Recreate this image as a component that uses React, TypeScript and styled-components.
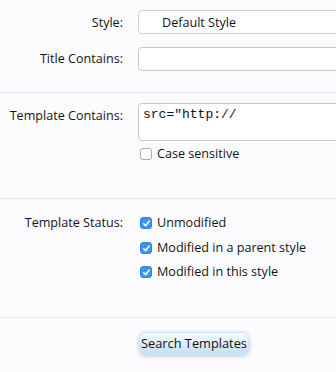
import React from "react";
import styled, { createGlobalStyle } from "styled-components";

const Global = createGlobalStyle`
  html, body { margin: 0; padding: 0; background: #fcfcff; }
  body { font-family: "Open Sans", "Liberation Sans", sans-serif; font-size: 12.6px; color: #141414; }
`;

const Form = styled.form`
  width: 336px;
  overflow: hidden;
`;

const Section = styled.div<{ $pt: number; $pb: number; $last?: boolean }>`
  padding: ${(p) => p.$pt}px 0 ${(p) => p.$pb}px;
  border-bottom: ${(p) => (p.$last ? "none" : "1px solid #dfeef3")};
  display: flex;
  flex-direction: column;
`;

const Row = styled.div<{ $gap?: number }>`
  display: grid;
  grid-template-columns: 123px 1fr;
  column-gap: 15px;
  align-items: start;
  margin-bottom: ${(p) => p.$gap ?? 0}px;
`;

const Label = styled.div<{ $pt: number }>`
  text-align: right;
  padding-top: ${(p) => p.$pt}px;
  line-height: 16px;
  white-space: nowrap;
`;

const Field = styled.div`
  display: flex;
  flex-direction: column;
  min-width: 0;
`;

const SelectBox = styled.div`
  height: 24px;
  box-sizing: border-box;
  width: 220px;
  border: 1px solid #cfcfd2;
  border-radius: 4px;
  background: #fff;
  padding-left: 23px;
  line-height: 23px;
`;

const TextInput = styled.div`
  height: 24px;
  box-sizing: border-box;
  width: 220px;
  border: 1px solid #c8c8cc;
  border-radius: 4px;
  background: #fff;
`;

const TextArea = styled.div`
  height: 38px;
  box-sizing: border-box;
  width: 220px;
  border: 1px solid #c8c8cc;
  border-radius: 4px;
  background: #fff;
  padding: 3px 4px;
  font-family: "Liberation Mono", monospace;
  font-size: 13px;
  line-height: 16px;
`;

const CheckRow = styled.label<{ $mt: number }>`
  display: flex;
  align-items: center;
  gap: 5px;
  margin-top: ${(p) => p.$mt}px;
  margin-left: 2px;
  height: 16px;
  line-height: 16px;
  white-space: nowrap;
`;

const Box = styled.span<{ $checked: boolean }>`
  width: 12px;
  height: 12px;
  box-sizing: border-box;
  border-radius: 3px;
  flex: none;
  display: flex;
  align-items: center;
  justify-content: center;
  background: ${(p) => (p.$checked ? "#3c93f0" : "#fff")};
  border: 1px solid ${(p) => (p.$checked ? "#2f83e0" : "#a9a9ad")};
`;

const Check = ({ checked }: { checked: boolean }) => (
  <Box $checked={checked}>
    {checked && (
      <svg width="9" height="9" viewBox="0 0 9 9">
        <path d="M1.8 4.8 L3.7 6.6 L7.2 2.2" fill="none" stroke="#fff" strokeWidth="1.6" strokeLinecap="round" strokeLinejoin="round" />
      </svg>
    )}
  </Box>
);

const ButtonRow = styled.div`
  padding-left: 139px;
`;

const Button = styled.button`
  height: 23px;
  width: 110px;
  padding: 0;
  border: 1px solid #d3e3ef;
  border-radius: 7px;
  background: linear-gradient(to bottom, #f4faff 0%, #dcedf9 55%, #c3def2 100%);
  box-shadow: 0 1px 4px rgba(110, 140, 170, 0.5);
  font-family: "Open Sans", "Liberation Sans", sans-serif;
  font-size: 12.8px;
  color: #111;
  line-height: 21px;
`;

export default function App() {
  return (
    <>
      <Global />
      <Form>
        <Section $pt={10} $pb={21}>
          <Row $gap={13}>
            <Label $pt={5}>Style:</Label>
            <Field>
              <SelectBox>Default Style</SelectBox>
            </Field>
          </Row>
          <Row>
            <Label $pt={4}>Title Contains:</Label>
            <Field>
              <TextInput />
            </Field>
          </Row>
        </Section>
        <Section $pt={10} $pb={36}>
          <Row>
            <Label $pt={5}>Template Contains:</Label>
            <Field>
              <TextArea>src="http://</TextArea>
              <CheckRow $mt={5}>
                <Check checked={false} />
                Case sensitive
              </CheckRow>
            </Field>
          </Row>
        </Section>
        <Section $pt={16} $pb={37}>
          <Row>
            <Label $pt={0}>Template Status:</Label>
            <Field>
              <CheckRow $mt={0}>
                <Check checked />
                Unmodified
              </CheckRow>
              <CheckRow $mt={9}>
                <Check checked />
                Modified in a parent style
              </CheckRow>
              <CheckRow $mt={8}>
                <Check checked />
                Modified in this style
              </CheckRow>
            </Field>
          </Row>
        </Section>
        <Section $pt={14} $pb={16} $last>
          <ButtonRow>
            <Button type="button">Search Templates</Button>
          </ButtonRow>
        </Section>
      </Form>
    </>
  );
}
